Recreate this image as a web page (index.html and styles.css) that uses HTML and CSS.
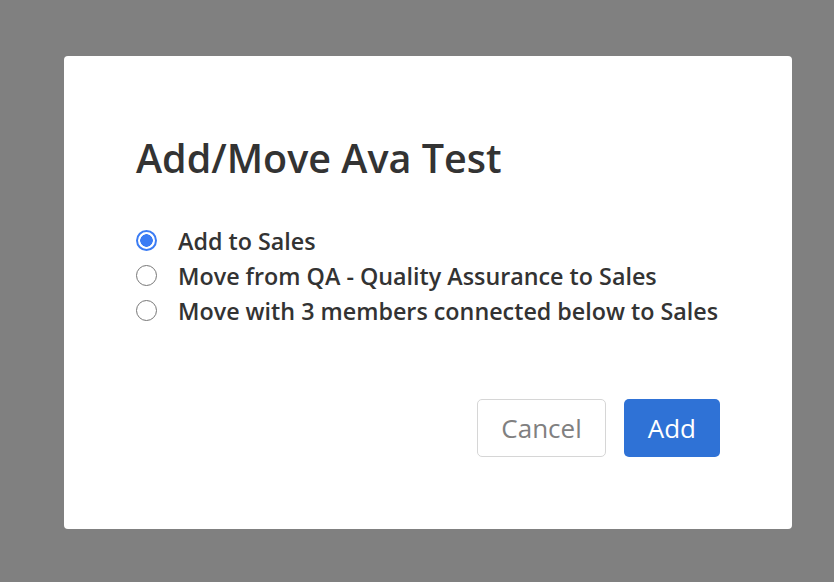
FILE: index.html
```html
<!DOCTYPE html>
<html lang="en">
<head>
  <meta charset="UTF-8" />
  <meta name="viewport" content="width=device-width, initial-scale=1.0" />
  <title>Add/Move Ava Test</title>
  <link rel="stylesheet" href="styles.css">
</head>
<body>
  <div class="overlay">
    <div class="modal">
      <h1 class="modal-title">Add/Move Ava Test</h1>

      <form class="move-form">
        <label class="option">
          <input type="radio" name="action" value="add" checked />
          <span>Add to Sales</span>
        </label>
        <label class="option">
          <input type="radio" name="action" value="move" />
          <span>Move from QA - Quality Assurance to Sales</span>
        </label>
        <label class="option">
          <input type="radio" name="action" value="move-team" />
          <span>Move with 3 members connected below to Sales</span>
        </label>

        <div class="actions">
          <button type="button" class="btn btn-cancel">Cancel</button>
          <button type="submit" class="btn btn-primary">Add</button>
        </div>
      </form>
    </div>
  </div>
</body>
</html>
```

FILE: styles.css
```css
body {
  font-family: "Open Sans", Arial, sans-serif;
  background-color: #808080;
  margin: 0;
  padding: 0;
}

.overlay {
  padding: 56px 42px 53px 64px;
}

.modal {
  width: 728px;
  height: 473px;
  box-sizing: border-box;
  background-color: #fff;
  border-radius: 4px;
  padding: 72px;
  display: flex;
  flex-direction: column;
}

.modal-title {
  margin: 0;
  font-size: 39.5px;
  font-weight: 600;
  line-height: 60px;
  color: #333;
}

.move-form {
  flex: 1;
  display: flex;
  flex-direction: column;
  margin-top: 35px;
}

.option {
  display: flex;
  align-items: center;
  height: 35px;
  font-size: 23.3px;
  font-weight: 600;
  color: #333;
}

.option input {
  appearance: none;
  width: 21px;
  height: 21px;
  margin: 0 21px 0 0;
  border: 1.5px solid #777;
  border-radius: 50%;
  box-sizing: border-box;
}

.option input:checked {
  border: 2px solid #3b7cf4;
  background: radial-gradient(circle, #3b7cf4 0 6px, #fff 6.5px);
}

.actions {
  margin-top: auto;
  display: flex;
  justify-content: flex-end;
  gap: 18px;
}

.btn {
  font-family: inherit;
  font-size: 26px;
  height: 58px;
  padding: 0 24px;
  border-radius: 5px;
  cursor: pointer;
}

.btn-cancel {
  background-color: #fff;
  color: #808080;
  border: 1px solid #d6d6d6;
  padding: 0 23px;
}

.btn-primary {
  background-color: #2f72d6;
  color: #fff;
  border: none;
}
```
